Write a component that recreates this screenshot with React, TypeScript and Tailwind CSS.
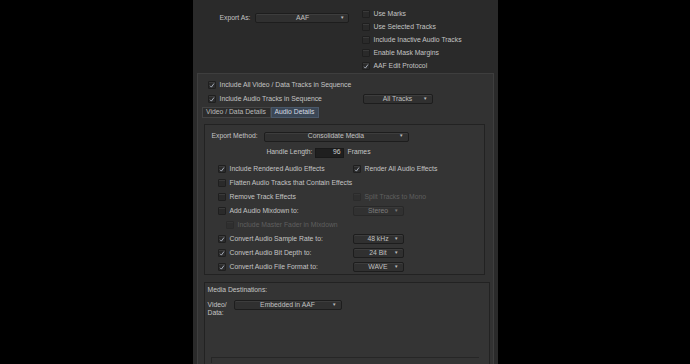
import React from "react";

// Small checkbox like the mac-style boxes in the export dialog
const Box = ({ checked = false, disabled = false }: { checked?: boolean; disabled?: boolean }) => (
  <span
    className={`flex items-center justify-center w-[8px] h-[8px] shrink-0 rounded-[1px] border border-[#1f1f1f] bg-[#2a2a2a] shadow-[inset_0_1px_0_#3a3a3a] ${
      disabled ? "opacity-40" : ""
    }`}
  >
    {checked && (
      <svg width="7" height="7" viewBox="0 0 7 7">
        <path d="M1.3 3.8 L2.8 5.4 L5.8 1.2" fill="none" stroke="#c9d2e3" strokeWidth="0.9" />
      </svg>
    )}
  </span>
);

const Check = ({
  label,
  checked = false,
  disabled = false,
  gap = "ml-[4px]",
}: {
  label: string;
  checked?: boolean;
  disabled?: boolean;
  gap?: string;
}) => (
  <div className="flex items-center">
    <Box checked={checked} disabled={disabled} />
    <span className={`${gap} whitespace-nowrap ${disabled ? "text-[#5f5f5f]" : "text-[#c4c4c4]"}`}>{label}</span>
  </div>
);

const Select = ({
  value,
  w,
  disabled = false,
}: {
  value: string;
  w: string;
  disabled?: boolean;
}) => (
  <div
    className={`relative flex items-center justify-center h-[10px] ${w} rounded-[2px] border border-[#1d1d1d] bg-[#303030] shadow-[inset_0_1px_0_#3d3d3d] ${
      disabled ? "opacity-50" : ""
    }`}
  >
    <span className="text-[#c0c0c0] whitespace-nowrap">{value}</span>
    <span className="absolute right-[4px] top-[1.5px] text-[4.5px] text-[#bdbdbd]">▼</span>
  </div>
);

const Row = ({ children }: { children: React.ReactNode }) => (
  <div className="flex items-center h-[14px]">{children}</div>
);

export default function App() {
  return (
    <div className="w-[690px] h-[364px] bg-black overflow-hidden font-['Liberation_Sans',Arial,sans-serif] text-[6.8px] leading-none text-[#c4c4c4]">
      <div className="mx-auto w-[305px] h-[364px] bg-[#2a2a2a] flex flex-col">
        {/* top: export format + options */}
        <div className="flex h-[73px] shrink-0">
          <div className="w-[169px] pl-[27px] pt-[13px] flex items-start">
            <span className="mt-[2px] whitespace-nowrap">Export As:</span>
            <div className="ml-[5px]">
              <Select value="AAF" w="w-[94px]" />
            </div>
          </div>
          <div className="flex flex-col pt-[7.5px]">
            <div className="flex items-center h-[13.3px]"><Check label="Use Marks" /></div>
            <div className="flex items-center h-[13.3px]"><Check label="Use Selected Tracks" /></div>
            <div className="flex items-center h-[13.3px]"><Check label="Include Inactive Audio Tracks" /></div>
            <div className="flex items-center h-[13.3px]"><Check label="Enable Mask Margins" /></div>
            <div className="flex items-center h-[13.3px]"><Check label="AAF Edit Protocol" checked /></div>
          </div>
        </div>

        {/* main settings panel */}
        <div className="mx-[4px] flex-1 border border-[#3e3e3e] border-b-0 bg-[#323232] flex flex-col">
          <div className="pt-[4px] pl-[10px]">
            <Row>
              <Check label="Include All Video / Data Tracks in Sequence" checked />
            </Row>
            <Row>
              <div className="w-[155px]">
                <Check label="Include Audio Tracks in Sequence" checked />
              </div>
              <Select value="All Tracks" w="w-[70px]" />
            </Row>
          </div>

          {/* tabs */}
          <div className="flex pl-[4px] mt-[1px]">
            <div className="h-[11px] w-[69px] flex items-center justify-center border border-[#444] bg-[#2c2c2c] text-[#bababa]">
              Video / Data Details
            </div>
            <div className="h-[11px] w-[48px] flex items-center justify-center border border-[#4a5869] bg-[#3b4756] text-[#d6dbe2]">
              Audio Details
            </div>
          </div>

          {/* audio details box */}
          <div className="ml-[6px] mt-[6px] w-[281px] h-[151px] border border-[#222] bg-[#343434] flex flex-col">
            <div className="flex items-center h-[12px] mt-[6px] pl-[7px]">
              <span className="w-[52px] whitespace-nowrap">Export Method:</span>
              <Select value="Consolidate Media" w="w-[145px]" />
            </div>
            <div className="flex items-center h-[11px] mt-[5px]">
              <span className="w-[108px] text-right whitespace-nowrap">Handle Length:</span>
              <div className="ml-[2px] w-[29px] h-[10px] bg-[#1f1f1f] border border-[#191919] flex items-center justify-end pr-[2px] text-[#d0d0d0]">
                96
              </div>
              <span className="ml-[4px]">Frames</span>
            </div>
            <div className="mt-[4px] pl-[13px]">
              <Row>
                <div className="w-[135px]"><Check label="Include Rendered Audio Effects" checked /></div>
                <Check label="Render All Audio Effects" checked />
              </Row>
              <Row>
                <Check label="Flatten Audio Tracks that Contain Effects" />
              </Row>
              <Row>
                <div className="w-[135px]"><Check label="Remove Track Effects" /></div>
                <Check label="Split Tracks to Mono" disabled />
              </Row>
              <Row>
                <div className="w-[135px]"><Check label="Add Audio Mixdown to:" /></div>
                <Select value="Stereo" w="w-[51px]" disabled />
              </Row>
              <Row>
                <div className="pl-[8px]">
                  <Check label="Include Master Fader in Mixdown" disabled />
                </div>
              </Row>
              <Row>
                <div className="w-[135px]"><Check label="Convert Audio Sample Rate to:" checked /></div>
                <Select value="48 kHz" w="w-[51px]" />
              </Row>
              <Row>
                <div className="w-[135px]"><Check label="Convert Audio Bit Depth to:" checked /></div>
                <Select value="24 Bit" w="w-[51px]" />
              </Row>
              <Row>
                <div className="w-[135px]"><Check label="Convert Audio File Format to:" checked /></div>
                <Select value="WAVE" w="w-[51px]" />
              </Row>
            </div>
          </div>

          {/* media destinations */}
          <div className="ml-[6px] mt-[7px] w-[286px] flex-1 border border-[#222] border-b-0 bg-[#343434] flex flex-col">
            <div className="pl-[3px] pt-[4px] h-[12px]">Media Destinations:</div>
            <div className="flex items-start pl-[3px] mt-[5px]">
              <div className="w-[26px] leading-[8px] pt-[1px]">
                Video/
                <br />
                Data:
              </div>
              <Select value="Embedded in AAF" w="w-[108px]" />
            </div>
            <div className="mt-[40px] ml-[6px] mr-[10px] h-[6px] border-t border-l border-[#262626]"></div>
          </div>
        </div>
      </div>
    </div>
  );
}
